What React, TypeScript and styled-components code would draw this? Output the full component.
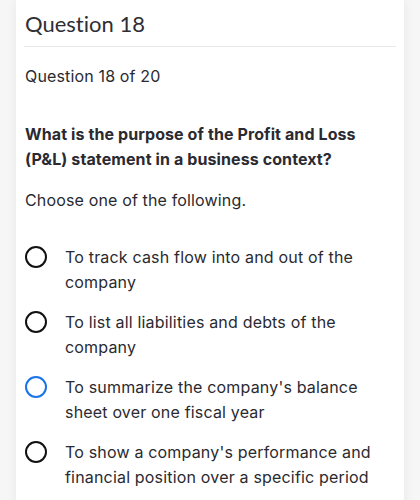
import React from "react";
import styled, { createGlobalStyle } from "styled-components";

const Global = createGlobalStyle`
  html, body { margin: 0; padding: 0; background: #f6f6f6; }
  body { font-family: Inter, "Noto Sans", sans-serif; -webkit-font-smoothing: antialiased; }
`;

const Page = styled.div`
  display: flex;
  justify-content: center;
  min-height: 500px;
`;

const Card = styled.div`
  width: 388px;
  background: #ffffff;
  box-shadow: 0 0 12px rgba(0, 0, 0, 0.06);
  padding: 0 8px 20px 8px;
  box-sizing: border-box;
`;

const Header = styled.div`
  padding: 11px 0 10px 1px;
  border-bottom: 1px solid #e8e8e8;
`;

const Title = styled.h1`
  margin: 0;
  font-family: Lato, "Open Sans", sans-serif;
  font-weight: 400;
  font-size: 22px;
  line-height: 25px;
  color: #2e2e34;
  letter-spacing: 0px;
  font-variant-ligatures: none;
  font-feature-settings: "liga" 0, "dlig" 0;
`;

const Body = styled.div`
  padding: 17px 0 0 1px;
  display: flex;
  flex-direction: column;
  color: #2a2a30;
`;

const Counter = styled.div`
  font-size: 16px;
  line-height: 25px;
  letter-spacing: 0.15px;
`;

const Prompt = styled.div`
  margin-top: 33px;
  font-size: 16px;
  font-weight: 700;
  line-height: 25px;
  letter-spacing: 0.1px;
`;

const Hint = styled.div`
  margin-top: 16px;
  font-size: 16px;
  line-height: 25px;
  letter-spacing: 0.15px;
`;

const Options = styled.div`
  margin-top: 32px;
  display: flex;
  flex-direction: column;
  gap: 15px;
`;

const Option = styled.label`
  display: flex;
  align-items: flex-start;
  gap: 18px;
  cursor: pointer;
`;

const Radio = styled.span<{ $active?: boolean }>`
  flex: 0 0 auto;
  width: 18px;
  height: 18px;
  margin-top: 1px;
  border-radius: 50%;
  border: 2.5px solid ${(p) => (p.$active ? "#1a73e8" : "#111111")};
  box-sizing: content-box;
`;

const OptionText = styled.span`
  font-size: 16px;
  line-height: 25px;
  letter-spacing: 0.18px;
  max-width: 312px;
`;

const options = [
  "To track cash flow into and out of the company",
  "To list all liabilities and debts of the company",
  "To summarize the company's balance sheet over one fiscal year",
  "To show a company's performance and financial position over a specific period",
];

export default function App() {
  return (
    <>
      <Global />
      <Page>
        <Card>
          <Header>
            <Title>Question 18</Title>
          </Header>
          <Body>
            <Counter>Question 18 of 20</Counter>
            <Prompt>What is the purpose of the Profit and Loss (P&amp;L) statement in a business context?</Prompt>
            <Hint>Choose one of the following.</Hint>
            <Options>
              {options.map((o, i) => (
                <Option key={i}>
                  <Radio $active={i === 2} />
                  <OptionText>{o}</OptionText>
                </Option>
              ))}
            </Options>
          </Body>
        </Card>
      </Page>
    </>
  );
}
